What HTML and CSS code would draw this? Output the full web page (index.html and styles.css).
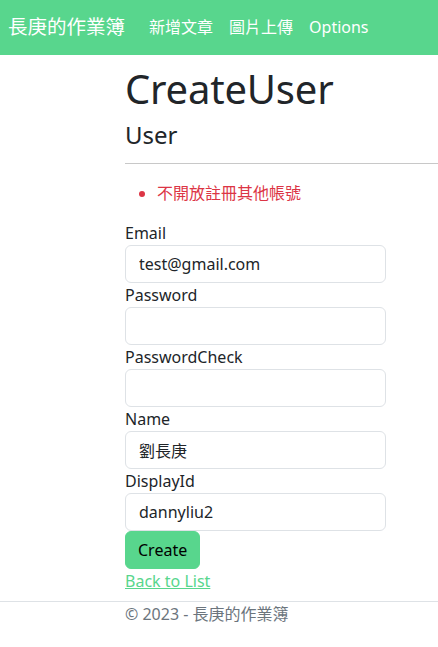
FILE: index.html
```html
<!DOCTYPE html>
<html lang="zh-Hant">
<head>
<meta charset="utf-8">
<title>CreateUser</title>
<link rel="stylesheet" href="styles.css">
</head>
<body>
<nav class="navbar">
  <a class="brand" href="#">長庚的作業簿</a>
  <a class="nav-link" href="#">新增文章</a>
  <a class="nav-link" href="#">圖片上傳</a>
  <a class="nav-link" href="#">Options</a>
</nav>
<main class="main">
  <h1 class="title">CreateUser</h1>
  <h4 class="subtitle">User</h4>
  <hr class="rule">
  <ul class="errors">
    <li>不開放註冊其他帳號</li>
  </ul>
  <form class="form">
    <div class="group">
      <label class="label">Email</label>
      <input class="input" type="text" value="test@gmail.com">
    </div>
    <div class="group">
      <label class="label">Password</label>
      <input class="input" type="password">
    </div>
    <div class="group">
      <label class="label">PasswordCheck</label>
      <input class="input" type="password">
    </div>
    <div class="group">
      <label class="label">Name</label>
      <input class="input" type="text" value="劉長庚">
    </div>
    <div class="group">
      <label class="label">DisplayId</label>
      <input class="input" type="text" value="dannyliu2">
    </div>
    <div class="actions">
      <button class="btn" type="button">Create</button>
    </div>
  </form>
  <div class="back"><a href="#" class="back-link">Back to List</a></div>
</main>
<footer class="footer">
  <div class="footer-text">© 2023 - 長庚的作業簿</div>
</footer>
</body>
</html>
```

FILE: styles.css
```css
html, body {
  margin: 0;
  padding: 0;
}
body {
  font-family: "Noto Sans", "Noto Sans CJK TC", sans-serif;
  font-size: 16px;
  line-height: 24px;
  color: #212529;
  background: #fff;
}
.navbar {
  height: 55px;
  background: #58d68d;
  display: flex;
  align-items: center;
  padding: 0 8px;
  box-sizing: border-box;
}
.brand {
  color: #fff;
  text-decoration: none;
  font-size: 19.5px;
  line-height: 30px;
  margin-right: 16px;
  margin-top: -2px;
}
.nav-link {
  color: #fff;
  text-decoration: none;
  font-size: 16px;
  padding: 0 8px;
  margin-top: -2px;
}
.main {
  margin-left: 125px;
  padding-top: 10px;
}
.title {
  margin: 0 0 7px;
  font-size: 40px;
  line-height: 48px;
  font-weight: 400;
  letter-spacing: -0.2px;
}
.subtitle {
  margin: 0;
  font-size: 24px;
  line-height: 29px;
  font-weight: 400;
}
.rule {
  margin: 14px 0 17px;
  border: 0;
  border-top: 1px solid #c8c8c8;
}
.errors {
  margin: 0 0 16px;
  padding-left: 32px;
  color: #dc3545;
}
.form {
  margin: 0;
  display: flex;
  flex-direction: column;
}
.group {
  display: flex;
  flex-direction: column;
  align-items: flex-start;
}
.label {
  line-height: 24px;
}
.input {
  width: 261px;
  height: 38px;
  box-sizing: border-box;
  padding: 6px 13px;
  font-family: inherit;
  font-size: 16px;
  color: #212529;
  border: 1px solid #dee2e6;
  border-radius: 6px;
  background: #fff;
}
.btn {
  height: 38px;
  padding: 6px 12px;
  font-family: inherit;
  font-size: 16px;
  color: #000;
  background: #58d68d;
  border: 1px solid #58d68d;
  border-radius: 6px;
}
.back {
  line-height: 24px;
}
.back-link {
  color: #58d68d;
}
.footer {
  margin-top: 8px;
  border-top: 1px solid #dee2e6;
}
.footer-text {
  margin-left: 125px;
  color: #6c757d;
  line-height: 24px;
}
```
